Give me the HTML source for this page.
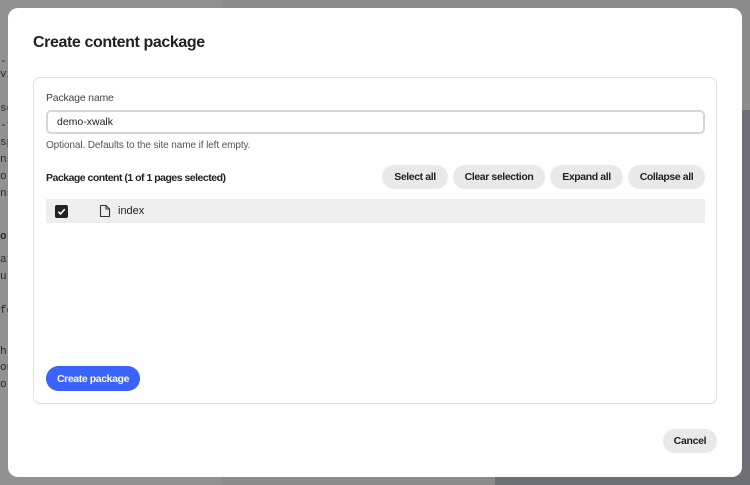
<!DOCTYPE html>
<html><head><style>
*{box-sizing:border-box;margin:0;padding:0}
body{width:750px;height:485px;overflow:hidden;background:#8c8c8c;font-family:"Liberation Sans",sans-serif;position:relative;color:#222}
.bgl{position:absolute;left:0;top:0;width:222px;height:485px;background:#919191;font-family:"Liberation Mono",monospace;font-size:11px;color:#2a2a2a}
.bgl div{position:absolute;left:0}
.bgr{position:absolute;left:495px;top:110px;width:255px;height:375px;background:#6e6f74}
.modal{position:absolute;left:8px;top:8px;width:734px;height:469px;background:#fff;border-radius:10px}
h1{position:absolute;left:25px;top:26px;font-size:16px;font-weight:bold;color:#222;letter-spacing:-0.4px}
.box{position:absolute;left:25px;top:69px;width:684px;height:327px;border:1px solid #e1e1e1;border-radius:7px}
.lbl{position:absolute;left:12px;top:14px;font-size:10.5px;color:#444;letter-spacing:-0.2px}
.inp{position:absolute;left:12px;top:32px;width:659px;height:24px;border:2px solid #d6d6d6;border-radius:5px;font-size:10.5px;padding:4px 9px;color:#222}
.help{position:absolute;left:12px;top:62px;font-size:10px;color:#555;letter-spacing:-0.1px}
.pc{position:absolute;left:12px;top:94px;font-size:10.5px;font-weight:bold;letter-spacing:-0.5px}
.btn{position:absolute;top:87px;height:24px;border-radius:12px;background:#e9e9e9;font-size:10.5px;font-weight:bold;letter-spacing:-0.4px;display:flex;align-items:center;justify-content:center;color:#222}
.row{position:absolute;left:12px;top:121px;width:659px;height:24px;background:#eeeeee}
.cb{position:absolute;left:9px;top:6px;width:13px;height:13px;background:#222;border-radius:2px}
.idx{position:absolute;left:72px;top:6px;font-size:11px}
.cp{position:absolute;left:12px;top:288px;width:94px;height:25px;border-radius:13px;background:#3b63fb;color:#fff;font-size:10.5px;font-weight:bold;letter-spacing:-0.4px;display:flex;align-items:center;justify-content:center}
.cancel{position:absolute;left:655px;top:421px;width:54px;height:24px;border-radius:12px;background:#e9e9e9;font-size:10.5px;font-weight:bold;letter-spacing:-0.3px;display:flex;align-items:center;justify-content:center}
</style></head><body>
<div class="bgl">
<div style="top:56px">-</div><div style="top:69px">vi</div><div style="top:103px">se</div><div style="top:120px">-f</div><div style="top:137px">sp</div><div style="top:154px">ns</div><div style="top:171px">or</div><div style="top:188px">ns</div><div style="top:231px;font-weight:bold">or</div><div style="top:254px">at</div><div style="top:271px">ur</div><div style="top:305px">fo</div><div style="top:346px">h</div><div style="top:362px">ou</div><div style="top:379px">or</div>
</div>
<div class="bgr"></div>
<div class="modal">
<h1>Create content package</h1>
<div class="box">
<div class="lbl">Package name</div>
<div class="inp">demo-xwalk</div>
<div class="help">Optional. Defaults to the site name if left empty.</div>
<div class="pc">Package content (1 of 1 pages selected)</div>
<div class="btn" style="left:348px;width:66px">Select all</div>
<div class="btn" style="left:419px;width:92px">Clear selection</div>
<div class="btn" style="left:516px;width:73px">Expand all</div>
<div class="btn" style="left:594px;width:77px">Collapse all</div>
<div class="row"><div class="cb"><svg width="13" height="13" viewBox="0 0 13 13"><path d="M3.3 6.7l2.2 2.2 4.3-4.8" stroke="#fff" stroke-width="1.6" fill="none"/></svg></div>
<svg style="position:absolute;left:53px;top:5px" width="12" height="14" viewBox="0 0 12 14"><path d="M1.5 1.5h5.5l3.5 3.5v7.5h-9z M7 1.5v3.5h3.5" stroke="#333" stroke-width="1.1" fill="none" stroke-linejoin="round"/></svg>
<div class="idx">index</div></div>
<div class="cp">Create package</div>
</div>
<div class="cancel">Cancel</div>
</div>
</body></html>
